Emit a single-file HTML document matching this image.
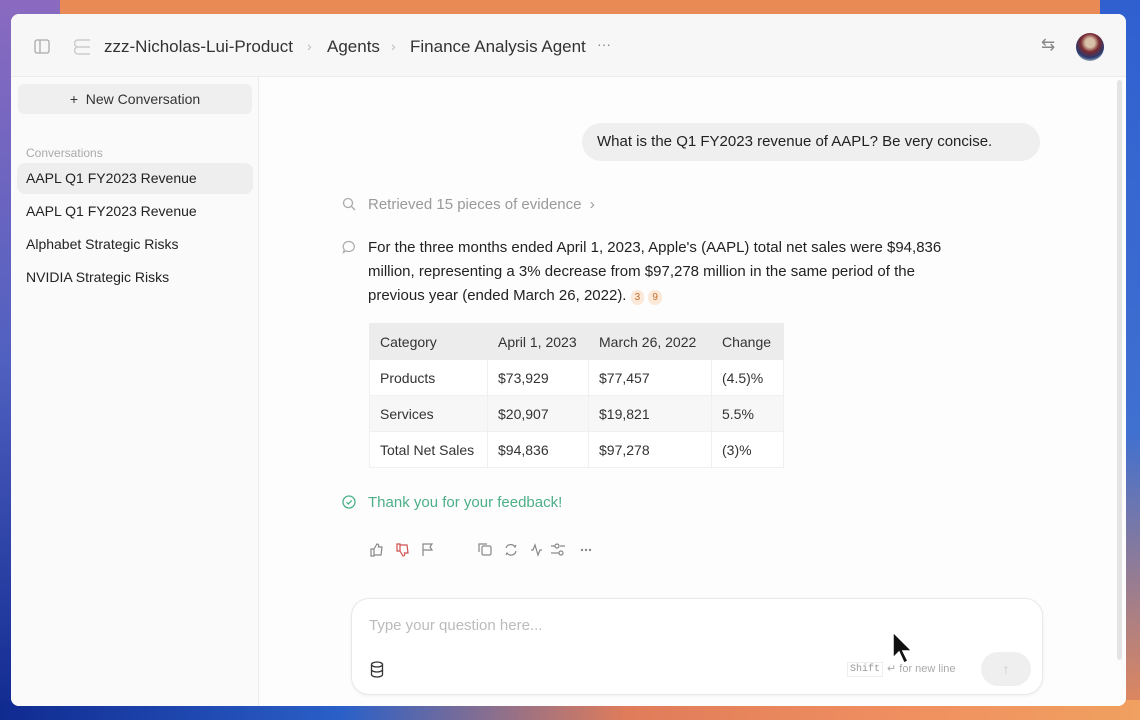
<!DOCTYPE html>
<html><head><meta charset="utf-8"><style>
*{box-sizing:border-box;margin:0;padding:0}
body{width:1140px;height:720px;overflow:hidden;font-family:"Liberation Sans",sans-serif;position:relative;
background:linear-gradient(180deg,#e98a55 0%,#f0a070 40%,#3f6fd0 80%,#2a55c0 100%);}
.bgl{position:absolute;left:0;top:0;width:60px;height:720px;background:linear-gradient(180deg,#8a6ac0,#5060c0 50%,#102a90)}
.bgr{position:absolute;right:0;top:0;width:40px;height:720px;background:linear-gradient(180deg,#3060d0,#4070d0 60%,#e88858)}
.bgb{position:absolute;left:0;bottom:0;width:1140px;height:20px;background:linear-gradient(90deg,#102a90,#2a60c8 30%,#e07c5a 55%,#f09060 80%,#f0a060)}
.win{position:absolute;left:11px;top:14px;width:1115px;height:692px;background:#fbfbfb;border-radius:8px;overflow:hidden}
.hdr{position:absolute;left:0;top:0;width:100%;height:63px;background:#f7f7f7;border-bottom:1px solid #ececec}
.t{position:absolute;white-space:nowrap}
.side{position:absolute;left:0;top:63px;width:248px;height:629px;background:#fafafa;border-right:1px solid #ececec}
.main{position:absolute;left:249px;top:63px;right:0;bottom:0;background:#fdfdfd}
table{position:absolute;left:358px;top:309px;border-collapse:collapse;font-size:14px;color:#333}
td{height:36px;padding:0 10px;border:1px solid #f0f0f0;background:#fff}
tr.h td{background:#ececec;border-color:#ececec}
tr.g td{background:#f7f7f7}
</style></head><body>
<div class="bgl"></div><div class="bgr"></div><div class="bgb"></div>
<div class="win">
 <div class="hdr">
  <svg class="t" style="left:23px;top:25px" width="16" height="15" viewBox="0 0 16 15"><rect x="1" y="1" width="14" height="13" rx="2" fill="none" stroke="#aaa" stroke-width="1.3"/><line x1="6" y1="1" x2="6" y2="14" stroke="#aaa" stroke-width="1.3"/></svg>
  <svg class="t" style="left:63px;top:24px" width="20" height="18" viewBox="0 0 20 18"><path d="M4 2h12M4 9h12M4 16h12M4 2a3.5 3.5 0 0 0 0 7a3.5 3.5 0 0 0 0 7" fill="none" stroke="#ccc" stroke-width="1.5"/></svg>
  <div class="t" style="left:93px;top:23px;font-size:17px;color:#333">zzz-Nicholas-Lui-Product</div>
  <div class="t" style="left:296px;top:24px;font-size:14px;color:#bbb">›</div>
  <div class="t" style="left:316px;top:23px;font-size:17px;color:#333">Agents</div>
  <div class="t" style="left:380px;top:24px;font-size:14px;color:#bbb">›</div>
  <div class="t" style="left:399px;top:23px;font-size:17px;color:#333">Finance Analysis Agent</div>
  <div class="t" style="left:586px;top:22px;font-size:14px;color:#888">···</div>
  <div class="t" style="left:1030px;top:21px;font-size:17px;color:#888">⇆</div>
  <div class="t" style="left:1065px;top:19px;width:28px;height:28px;border-radius:50%;background:radial-gradient(circle at 50% 35%,#d8c0a8 20%,#7a2a30 40%,#2a3a70 65%,#9ab 80%)"></div>
 </div>
 <div class="side">
  <div class="t" style="left:7px;top:7px;width:234px;height:30px;background:#efefef;border-radius:6px;font-size:14px;color:#333;text-align:center;line-height:30px">+&nbsp; New Conversation</div>
  <div class="t" style="left:15px;top:69px;font-size:12px;color:#aaa">Conversations</div>
  <div class="t" style="left:6px;top:86px;width:236px;height:31px;background:#eeeeee;border-radius:8px"></div>
  <div class="t" style="left:15px;top:93px;font-size:14px;color:#222">AAPL Q1 FY2023 Revenue</div>
  <div class="t" style="left:15px;top:126px;font-size:14px;color:#222">AAPL Q1 FY2023 Revenue</div>
  <div class="t" style="left:15px;top:159px;font-size:14px;color:#222">Alphabet Strategic Risks</div>
  <div class="t" style="left:15px;top:192px;font-size:14px;color:#222">NVIDIA Strategic Risks</div>
 </div>
 <div class="main"></div>
 <div class="t" style="left:1106px;top:66px;width:5px;height:580px;background:#e4e4e4;border-radius:3px"></div>
 <div class="t" style="left:571px;top:109px;width:458px;height:38px;background:#efefef;border-radius:19px;font-size:15px;color:#222;line-height:38px;padding-left:15px">What is the Q1 FY2023 revenue of AAPL? Be very concise.</div>
 <svg class="t" style="left:331px;top:183px" width="14" height="14" viewBox="0 0 14 14"><circle cx="6" cy="6" r="4.5" fill="none" stroke="#aaa" stroke-width="1.3"/><line x1="9.5" y1="9.5" x2="13" y2="13" stroke="#aaa" stroke-width="1.3"/></svg>
 <div class="t" style="left:357px;top:182px;font-size:15px;color:#999">Retrieved 15 pieces of evidence&nbsp; ›</div>
 <svg class="t" style="left:331px;top:226px" width="14" height="14" viewBox="0 0 14 14"><path d="M7 1.5a5.5 5 0 1 1-3 9.3L1.5 12.5l.8-3A5.5 5 0 0 1 7 1.5z" fill="none" stroke="#aaa" stroke-width="1.2"/></svg>
 <div class="t" style="left:357px;top:222px;font-size:15px;color:#222;line-height:24px;white-space:normal;width:605px">For the three months ended April 1, 2023, Apple's (AAPL) total net sales were $94,836 million, representing a 3% decrease from $97,278 million in the same period of the previous year (ended March 26, 2022). <span style="display:inline-block;font-size:10px;color:#c07030;background:#fbe8d8;border-radius:8px;padding:0 4px;line-height:15px">3</span> <span style="display:inline-block;font-size:10px;color:#c07030;background:#fbe8d8;border-radius:8px;padding:0 4px;line-height:15px">9</span></div>
 <table>
  <tr class="h"><td style="width:118px">Category</td><td style="width:101px">April 1, 2023</td><td style="width:123px">March 26, 2022</td><td style="width:72px">Change</td></tr>
  <tr><td>Products</td><td>$73,929</td><td>$77,457</td><td>(4.5)%</td></tr>
  <tr class="g"><td>Services</td><td>$20,907</td><td>$19,821</td><td>5.5%</td></tr>
  <tr><td>Total Net Sales</td><td>$94,836</td><td>$97,278</td><td>(3)%</td></tr>
 </table>
 <svg class="t" style="left:331px;top:481px" width="14" height="14" viewBox="0 0 14 14"><circle cx="7" cy="7" r="6" fill="none" stroke="#4caf88" stroke-width="1.3"/><path d="M4.5 7.2l1.8 1.8 3.4-3.6" fill="none" stroke="#4caf88" stroke-width="1.3"/></svg>
 <div class="t" style="left:357px;top:480px;font-size:15px;color:#4caf88">Thank you for your feedback!</div>
 <svg class="t" style="left:358px;top:528px" width="240" height="16" viewBox="0 0 240 16" fill="none" stroke="#888" stroke-width="1.2">
  <path d="M2 7h3v7H2zM5 7l3-5c1.5 0 2 1 1.5 3H13l-1 8H5"/>
  <path d="M28 9h3V2h-3zM31 9l3 5c1.5 0 2-1 1.5-3H39l-1-8H31" stroke="#d05050"/>
  <path d="M54 14V2h9l-2 3 2 3h-9"/>
  <rect x="113" y="4" width="9" height="9" rx="1.5"/><path d="M110 10V2h8"/>
  <path d="M137 6a5 5 0 0 1 9-1l1-2M147 9a5 5 0 0 1-9 2l-1 2"/>
  <path d="M162 8h2l2-5 3 10 2-5h2"/>
  <circle cx="188" cy="4" r="2"/><path d="M191 4h5M182 4h4"/><circle cx="192" cy="11" r="2"/><path d="M182 11h8"/>
  <circle cx="213" cy="8" r=".6" fill="#888"/><circle cx="217" cy="8" r=".6" fill="#888"/><circle cx="221" cy="8" r=".6" fill="#888"/>
 </svg>
 <div class="t" style="left:340px;top:584px;width:692px;height:97px;background:#fff;border:1px solid #e8e8e8;border-radius:18px;box-shadow:0 1px 3px rgba(0,0,0,.06)"></div>
 <div class="t" style="left:358px;top:603px;font-size:15px;color:#bbb">Type your question here...</div>
 <svg class="t" style="left:359px;top:647px" width="14" height="17" viewBox="0 0 14 17" fill="none" stroke="#333" stroke-width="1.3"><ellipse cx="7" cy="3.5" rx="5.5" ry="2.5"/><path d="M1.5 3.5v10c0 1.4 2.5 2.5 5.5 2.5s5.5-1.1 5.5-2.5v-10M1.5 8.5c0 1.4 2.5 2.5 5.5 2.5s5.5-1.1 5.5-2.5"/></svg>
 <div class="t" style="left:836px;top:648px;font-size:10px;color:#999;font-family:'Liberation Mono',monospace;border:1px solid #eee;padding:1px 2px">Shift</div>
 <div class="t" style="left:876px;top:648px;font-size:11px;color:#aaa">↵ for new line</div>
 <div class="t" style="left:970px;top:638px;width:50px;height:34px;border-radius:17px;background:#efefef;color:#ccc;text-align:center;line-height:34px;font-size:14px">↑</div>
 <svg class="t" style="left:880px;top:616px" width="26" height="36" viewBox="0 0 26 36"><path d="M2 2v26l6-6 5 11 4-2-5-10h9z" fill="#111" stroke="#fff" stroke-width="1.5"/></svg>
</div>
</body></html>
